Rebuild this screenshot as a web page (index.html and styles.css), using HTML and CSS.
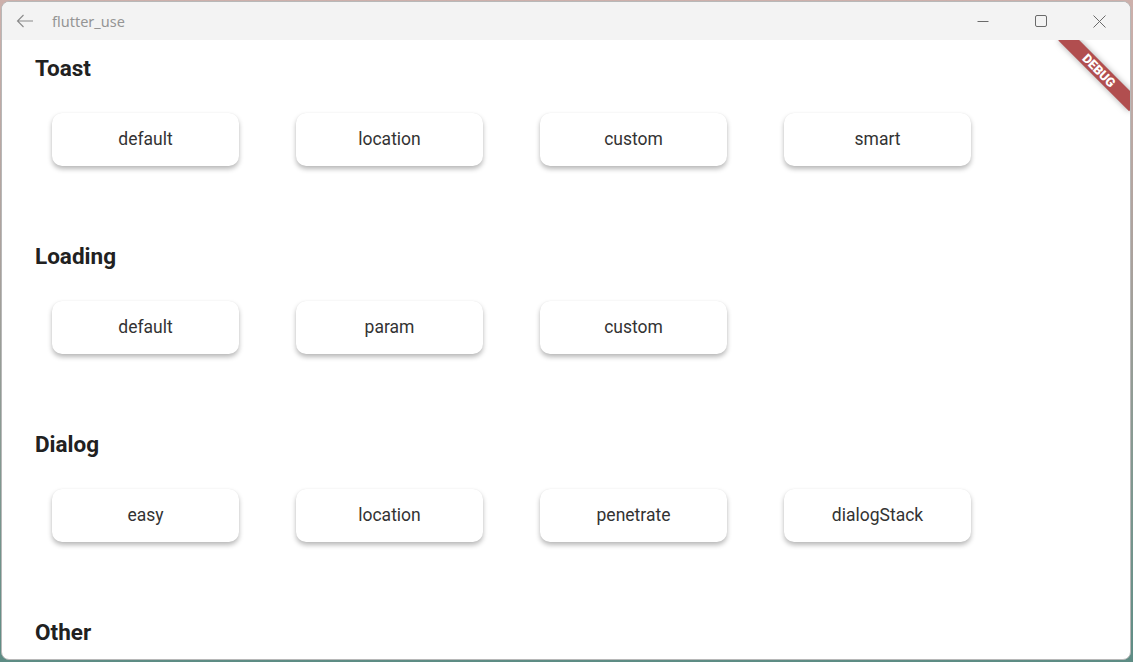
FILE: index.html
```html
<!DOCTYPE html>
<html>
<head>
<meta charset="utf-8">
<title>flutter_use</title>
<link rel="stylesheet" href="styles.css">
</head>
<body>
<div class="window">
  <div class="titlebar">
    <div class="back">
      <svg width="18" height="14" viewBox="0 0 18 14"><path d="M17 7H1.5M7.5 1L1.5 7l6 6" fill="none" stroke="#8a8a8a" stroke-width="1.1"/></svg>
    </div>
    <div class="title">flutter_use</div>
    <div class="controls">
      <div class="ctl"><svg width="12" height="12" viewBox="0 0 12 12"><path d="M0.5 6.5h11" stroke="#6a6a6a" stroke-width="1"/></svg></div>
      <div class="ctl"><svg width="12" height="12" viewBox="0 0 12 12"><rect x="0.5" y="0.5" width="11" height="11" rx="1.5" fill="none" stroke="#6a6a6a" stroke-width="1"/></svg></div>
      <div class="ctl"><svg width="13" height="13" viewBox="0 0 13 13"><path d="M0.5 0.5l12 12M12.5 0.5l-12 12" stroke="#6a6a6a" stroke-width="1"/></svg></div>
    </div>
  </div>
  <div class="content">
    <section class="section">
      <h2 class="heading">Toast</h2>
      <div class="row">
        <button class="btn">default</button>
        <button class="btn">location</button>
        <button class="btn">custom</button>
        <button class="btn">smart</button>
      </div>
    </section>
    <section class="section">
      <h2 class="heading">Loading</h2>
      <div class="row">
        <button class="btn">default</button>
        <button class="btn">param</button>
        <button class="btn">custom</button>
      </div>
    </section>
    <section class="section">
      <h2 class="heading">Dialog</h2>
      <div class="row">
        <button class="btn">easy</button>
        <button class="btn">location</button>
        <button class="btn">penetrate</button>
        <button class="btn">dialogStack</button>
      </div>
    </section>
    <section class="section">
      <h2 class="heading">Other</h2>
    </section>
    <div class="banner"><div class="ribbon">DEBUG</div></div>
  </div>
</div>
</body>
</html>
```

FILE: styles.css
```css
html, body {
  margin: 0;
  padding: 0;
  width: 1133px;
  height: 662px;
  overflow: hidden;
}
body {
  background: linear-gradient(180deg, #cdb0ab 0%, #a9a19c 40%, #7d978f 75%, #5d8c84 100%);
}
.window {
  margin: 1px 3px 0 1px;
  width: 1128px;
  height: 657px;
  border: 1px solid #b8b8b8;
  border-radius: 8px;
  overflow: hidden;
  background: #ffffff;
  display: flex;
  flex-direction: column;
}
.titlebar {
  height: 38px;
  flex: none;
  background: #f3f3f3;
  display: flex;
  align-items: center;
}
.back {
  width: 46px;
  padding-left: 14px;
  box-sizing: border-box;
  display: flex;
  align-items: center;
}
.back svg { display: block; }
.title {
  font-family: "Noto Sans", "Open Sans", sans-serif;
  font-size: 14.5px;
  color: #959595;
  margin-left: 4px;
  padding-bottom: 1px;
}
.controls {
  margin-left: auto;
  display: flex;
  margin-right: 2px;
}
.ctl {
  width: 58px;
  height: 38px;
  display: flex;
  align-items: center;
  justify-content: center;
}
.ctl svg { display: block; }
.content {
  position: relative;
  flex: 1;
  overflow: hidden;
  padding: 16px 0 0 33px;
  font-family: Roboto, "Noto Sans", sans-serif;
}
.section {
  margin-bottom: 78px;
}
.heading {
  margin: 0;
  font-size: 22.5px;
  line-height: 24px;
  font-weight: 700;
  color: #212121;
}
.row {
  display: flex;
  gap: 57px;
  margin-top: 33px;
  padding-left: 17px;
}
.btn {
  width: 187px;
  height: 53px;
  border: none;
  border-radius: 10px;
  background: #ffffff;
  font-family: Roboto, "Noto Sans", sans-serif;
  font-size: 17.5px;
  color: #333333;
  box-shadow: 0 3px 5px rgba(0, 0, 0, 0.28), 0 0 1px rgba(0, 0, 0, 0.08);
  padding: 0 0 2px 0;
}
.banner {
  position: absolute;
  top: 0;
  right: 0;
  width: 90px;
  height: 90px;
  overflow: hidden;
}
.ribbon {
  position: absolute;
  left: 9px;
  top: 23px;
  width: 100px;
  height: 15px;
  line-height: 15px;
  background: #b14e4f;
  color: #ffffff;
  font-family: Roboto, "Noto Sans", sans-serif;
  font-weight: 900;
  font-size: 12.75px;
  text-align: center;
  transform: rotate(45deg);
  box-shadow: 0 0 6px rgba(0, 0, 0, 0.35);
}
```
